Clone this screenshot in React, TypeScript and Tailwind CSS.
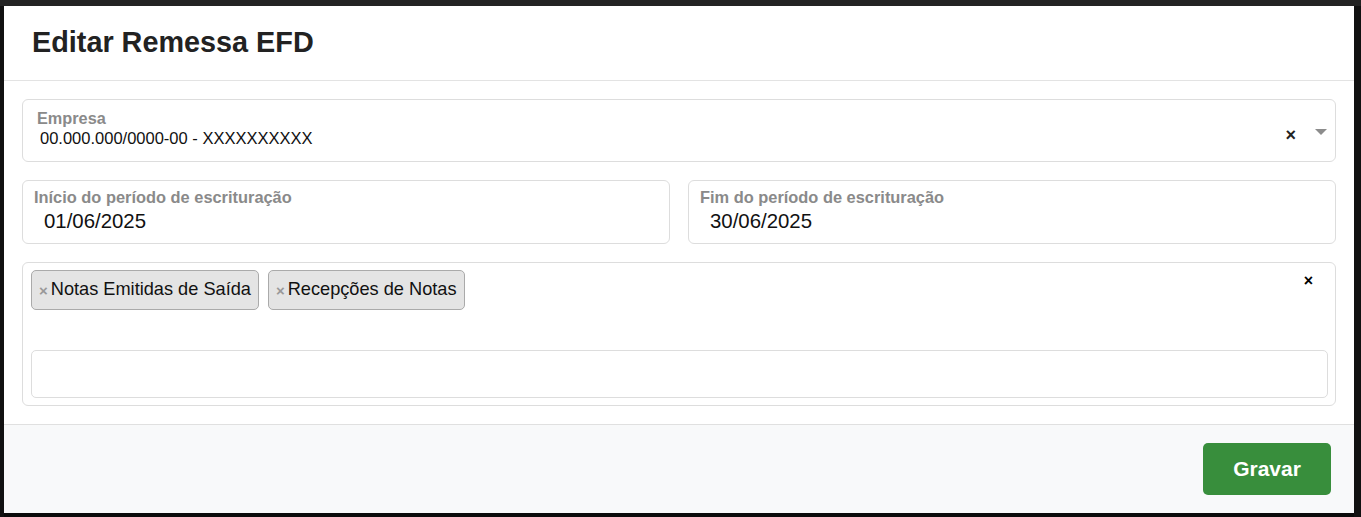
import React from "react";

const font = { fontFamily: '"Liberation Sans", Arial, sans-serif' };

function Tag({ label }: { label: string }) {
  return (
    <div className="flex items-center h-[40px] pl-[7px] pr-[7px] bg-[#e4e4e4] border border-[#aaaaaa] rounded-[5px]">
      <span className="text-[#999] text-[15px] font-bold mr-[3px] leading-none">×</span>
      <span className="text-[18.2px] text-[#111]">{label}</span>
    </div>
  );
}

export default function App() {
  return (
    <div className="w-[1361px] h-[517px] bg-[#0b0b0b] flex flex-col overflow-hidden" style={font}>
      <div className="h-[6px] bg-[#232323] shrink-0" />
      <div className="flex flex-1">
        <div className="w-[4px] bg-[#111]" />
        <div className="w-[1350px] h-[507px] bg-white flex flex-col">
          <div className="h-[75px] border-b border-[#e3e3e3] flex items-center pl-[28px] pb-[0px] shrink-0">
            <h1 className="text-[28.8px] font-bold text-[#222]">Editar Remessa EFD</h1>
          </div>
          <div className="px-[18px] pt-[18px] pb-[18px] flex flex-col gap-[18px] shrink-0">
            <div className="h-[63px] border border-[#dddddd] rounded-[6px] flex items-center pr-[8px]">
              <div className="flex-1 flex flex-col pl-[14px] pb-[4px]">
                <span className="text-[16.3px] font-bold text-[#8a8a8a] leading-[19px]">Empresa</span>
                <span className="text-[16.5px] text-[#111] leading-[20px] pl-[3px]">00.000.000/0000-00 - XXXXXXXXXX</span>
              </div>
              <span className="text-[#222] text-[18px] font-bold leading-none mt-[8px] mr-[19px]">×</span>
              <svg width="12" height="7" viewBox="0 0 12 7" className="mt-[3px]">
                <path d="M0 0 L12 0 L6 6 Z" fill="#8c8c8c" />
              </svg>
            </div>
            <div className="flex gap-[18px]">
              <div className="flex-1 h-[64px] border border-[#dddddd] rounded-[6px] flex flex-col pl-[11px] pt-[7px]">
                <span className="text-[16.4px] font-bold text-[#8a8a8a] leading-[19px]">Início do período de escrituração</span>
                <span className="text-[20.4px] text-[#111] leading-[28px] pl-[10px]">01/06/2025</span>
              </div>
              <div className="flex-1 h-[64px] border border-[#dddddd] rounded-[6px] flex flex-col pl-[11px] pt-[7px]">
                <span className="text-[16.4px] font-bold text-[#8a8a8a] leading-[19px]">Fim do período de escrituração</span>
                <span className="text-[20.4px] text-[#111] leading-[28px] pl-[10px]">30/06/2025</span>
              </div>
            </div>
            <div className="h-[144px] border border-[#dddddd] rounded-[6px] flex flex-col pl-[8px] pr-[7px] pt-[7px] pb-[7px]">
              <div className="flex items-start">
                <div className="flex gap-[9px] flex-1">
                  <Tag label="Notas Emitidas de Saída" />
                  <Tag label="Recepções de Notas" />
                </div>
                <span className="text-[#000] text-[16px] font-bold leading-none mt-[3px] mr-[15px]">×</span>
              </div>
              <div className="flex-1" />
              <div className="h-[48px] border border-[#dddddd] rounded-[5px]" />
            </div>
          </div>
          <div className="flex-1 bg-[#f8f9fa] border-t border-[#e0e0e0] flex justify-end items-start pt-[18px] pr-[23px]">
            <button className="w-[128px] h-[52px] bg-[#388e3c] rounded-[5px] text-white text-[21px] font-bold">Gravar</button>
          </div>
        </div>
        <div className="flex-1 bg-[#111]" />
      </div>
    </div>
  );
}
